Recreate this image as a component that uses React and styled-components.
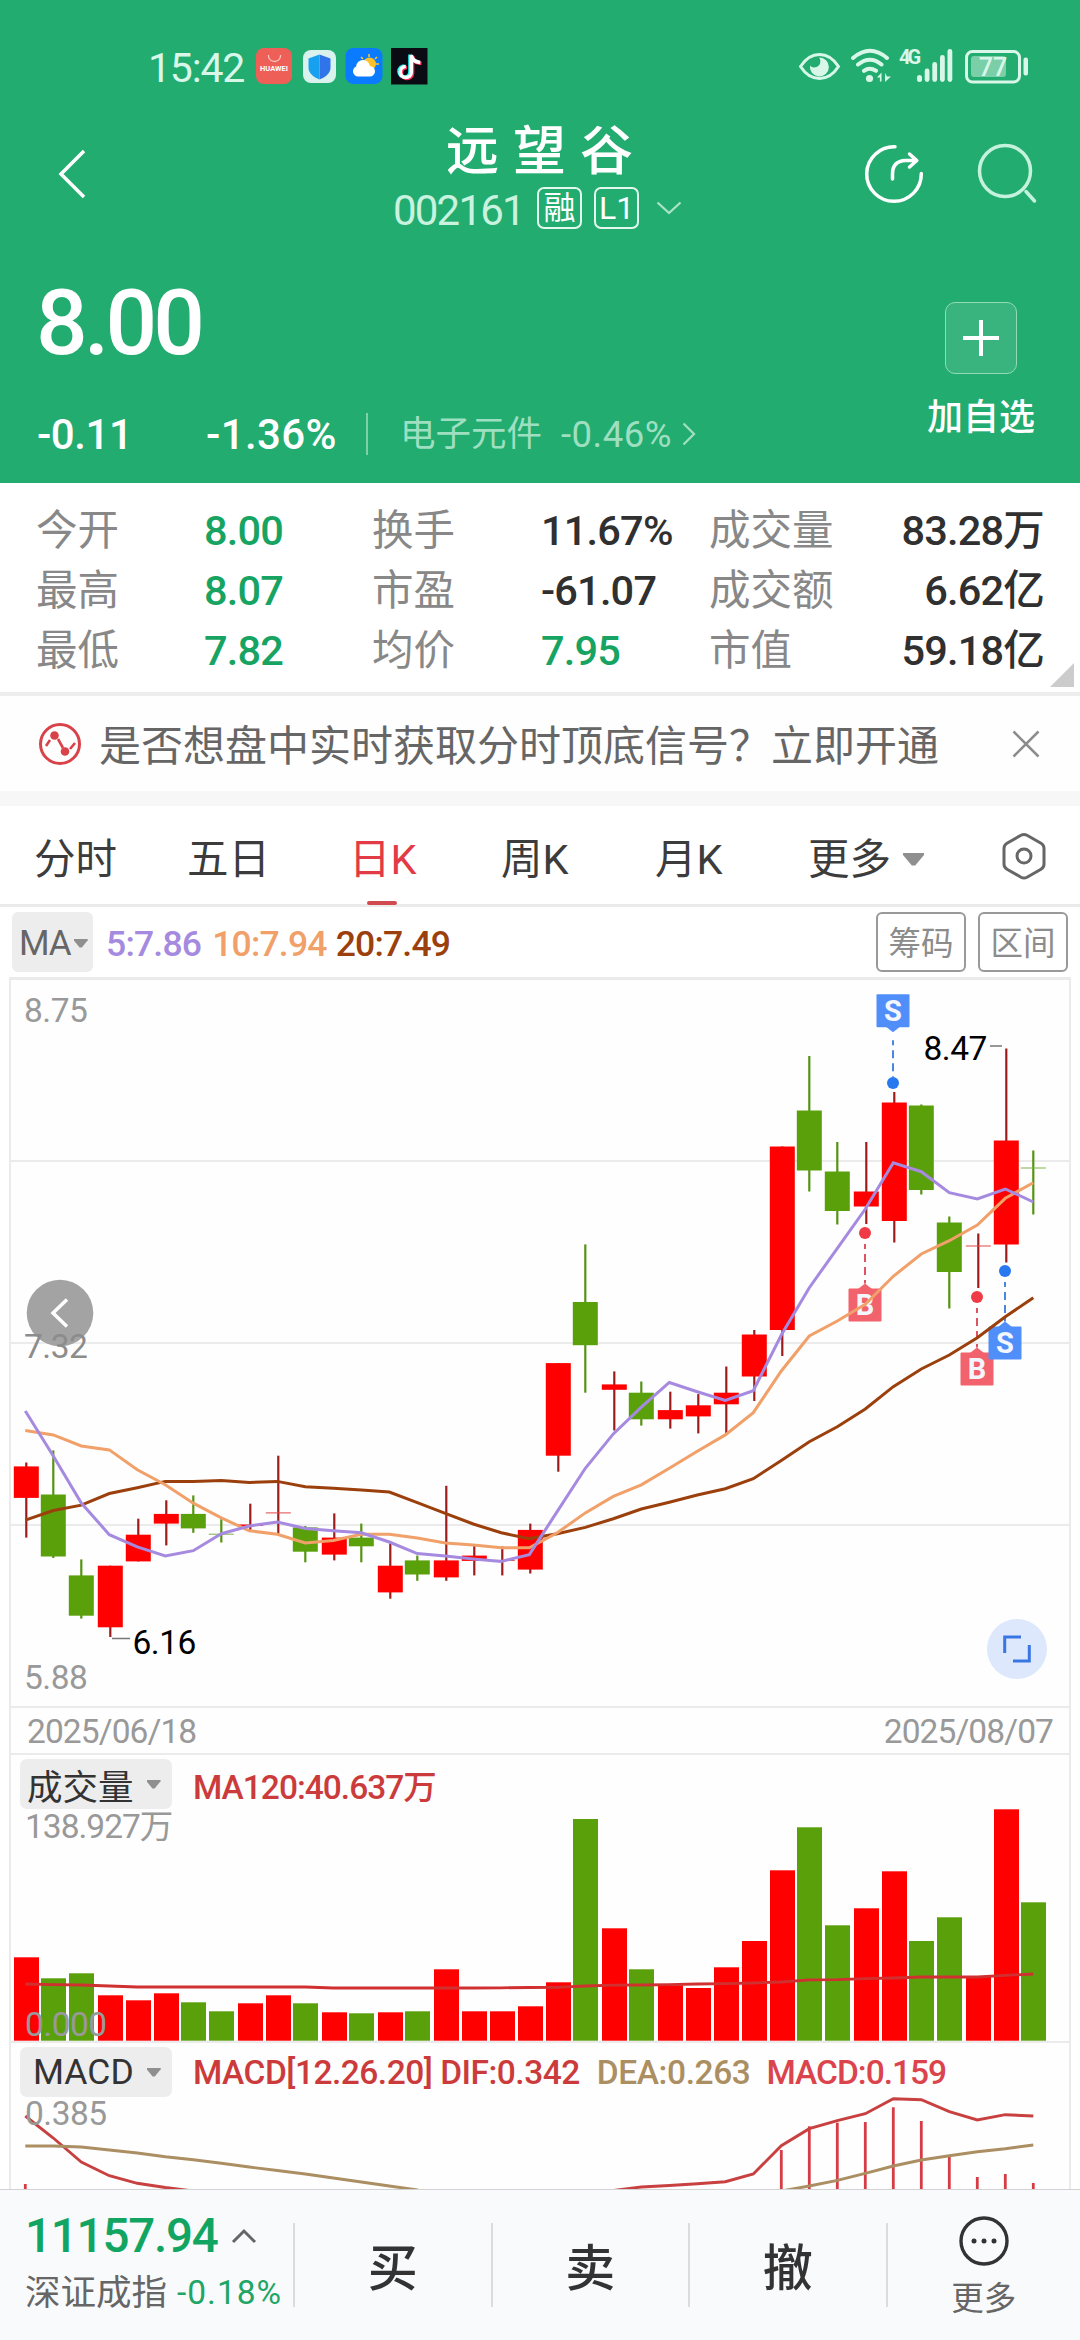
import React from "react";

//styled
import styled, { createGlobalStyle } from "styled-components";

//Data: [up, high, bodyTop, bodyBottom, low]
const candles = [
  [1, 1462.5, 1466.4, 1497.9, 1537.6],
  [0, 1450.4, 1494.5, 1556.5, 1558],
  [0, 1559.4, 1575.4, 1615.7, 1618.6],
  [1, 1565.7, 1565.7, 1627.3, 1637],
  [1, 1518.7, 1534.7, 1561.4, 1561.4],
  [1, 1500.3, 1513.9, 1523.6, 1545.4],
  [0, 1495.4, 1513.9, 1528.4, 1532.8],
  [0, 1519.2, 1533.7, 1534.7, 1542.5],
  [1, 1503.7, 1524.5, 1526, 1530.8],
  [1, 1455.7, 1512.4, 1513.4, 1533.7],
  [0, 1526, 1527.4, 1551.7, 1562.3],
  [1, 1513.4, 1537.6, 1554.6, 1560.4],
  [0, 1523.6, 1537.6, 1546.3, 1562.3],
  [1, 1543.4, 1565.7, 1592.4, 1598.7],
  [0, 1555.6, 1560.4, 1574.5, 1580.8],
  [1, 1485.8, 1560.4, 1577.4, 1580.8],
  [1, 1544.4, 1555.6, 1560.9, 1575.4],
  [1, 1546.3, 1559.9, 1560.9, 1575.4],
  [1, 1523.6, 1529.9, 1569.6, 1573.5],
  [1, 1363.1, 1363.1, 1455.7, 1471.7],
  [0, 1244.4, 1302, 1345.2, 1392.7],
  [1, 1371.4, 1384.4, 1389.8, 1430.5],
  [0, 1381.5, 1392.7, 1419.3, 1425.6],
  [1, 1391.7, 1410.1, 1419.3, 1428.6],
  [1, 1394.1, 1405.3, 1416.4, 1433.4],
  [1, 1366.5, 1392.7, 1404.3, 1433.4],
  [1, 1330, 1334.5, 1376.5, 1401],
  [1, 1146.5, 1146.5, 1330, 1356],
  [0, 1056, 1110.5, 1170.5, 1191.5],
  [0, 1142, 1171.5, 1211, 1224.5],
  [1, 1142, 1191.5, 1206.5, 1224],
  [1, 1092, 1102.5, 1221, 1242.5],
  [0, 1104.5, 1105.5, 1190, 1194.5],
  [0, 1216.5, 1222.5, 1272, 1308.5],
  [1, 1233.5, 1245.5, 1246.5, 1288],
  [1, 1048.5, 1140.5, 1244.5, 1262.5],
  [0, 1150.5, 1167.5, 1168.5, 1214.5],
];

const ma5 = [
  1411, 1456, 1503, 1534.7, 1546.8, 1556, 1550.7, 1533.7, 1526, 1522, 1528.4,
  1530.8, 1532.8, 1542, 1553.6, 1556, 1559, 1561.4, 1554.6, 1511.4, 1468.3,
  1433.9, 1407.2, 1382.5, 1391.7, 1400.4, 1390.7, 1335, 1287.7, 1248.3, 1209,
  1162.7, 1171.7, 1192.7, 1199, 1189, 1202,
];
const ma10 = [
  1430.5, 1434.9, 1446, 1449.9, 1469.8, 1484.8, 1503.2, 1517.8, 1530.8, 1534.2,
  1543, 1540.5, 1534.2, 1534.2, 1538.1, 1543, 1544.9, 1547.8, 1547.8, 1532.8,
  1512.9, 1496.4, 1484.8, 1468.3, 1451.3, 1434.9, 1412.7, 1371, 1336, 1321,
  1304.3, 1276.3, 1254, 1240.7, 1225, 1198.3, 1182.7,
];
const ma20 = [
  1520.2, 1510.5, 1505.1, 1493.5, 1487.7, 1481.4, 1481.4, 1480.4, 1482.4,
  1481.4, 1486.7, 1488.2, 1490.1, 1492.1, 1502.7, 1513.4, 1524, 1532.8, 1538.6,
  1533.7, 1527.4, 1518.7, 1509, 1502.2, 1495, 1488.7, 1478.7, 1460.5, 1441.7,
  1426.7, 1409, 1386.7, 1369, 1355, 1337.7, 1316.7, 1297.7,
];

const volumes = [
  1957.3, 1978.3, 1973.3, 1995.3, 2000.3, 1993.3, 2002.3, 2011.3, 2003.3,
  1995.3, 2003.3, 2012.3, 2013.3, 2012.3, 2011.3, 1969.3, 2011.3, 2011.3,
  2006.3, 1982.3, 1819, 1928.3, 1969.3, 1985.3, 1988, 1967.3, 1941, 1870.3,
  1827.3, 1925.3, 1908.3, 1871.3, 1941, 1917.3, 1976.7, 1809.3, 1902.3,
];
const ma120 = [
  1984, 1984.7, 1985, 1986, 1987, 1987, 1987, 1987, 1987, 1987, 1987, 1988,
  1988, 1988, 1988, 1988, 1988, 1987.8, 1987.5, 1987.3, 1986, 1985.2, 1985,
  1984.7, 1984, 1983.7, 1983, 1982, 1979.9, 1979.7, 1978.7, 1978, 1977, 1977,
  1977, 1975.3, 1974,
];

const dif = [
  2116, 2138, 2162, 2175.7, 2183.3, 2187.5, 2191, 2200, 2200, 2200, 2200, 2200,
  2200, 2200, 2200, 2200, 2200, 2200, 2200, 2200, 2196, 2190.5, 2187, 2185.5,
  2183.7, 2181.7, 2174, 2145.7, 2128.7, 2120.7, 2113.7, 2098.7, 2099.7, 2111.7,
  2120, 2114.7, 2116,
];
const dea = [
  2146, 2146, 2147, 2150, 2153, 2156.7, 2159.7, 2163.3, 2167, 2170.5, 2174,
  2178, 2182, 2186, 2190, 2200, 2200, 2200, 2200, 2200, 2200, 2200, 2200, 2200,
  2200, 2200, 2196, 2191, 2186, 2180.3, 2173.3, 2166, 2160, 2155.7, 2151.7,
  2148.7, 2145,
];
const hist = [
  [0, 2184],
  [27, 2150],
  [28, 2126.3],
  [29, 2122.7],
  [30, 2122],
  [31, 2107.3],
  [32, 2121],
  [33, 2155.7],
  [34, 2177],
  [35, 2174],
  [36, 2183],
];

const stats = [
  ["今开", "8.00", "up", "换手", "11.67%", "", "成交量", "83.28万"],
  ["最高", "8.07", "up", "市盈", "-61.07", "", "成交额", "6.62亿"],
  ["最低", "7.82", "up", "均价", "7.95", "up", "市值", "59.18亿"],
];

const tabs = [
  ["分时", 153],
  ["五日", 162],
  ["日K", 152],
  ["周K", 154],
  ["月K", 153],
];

const px = (i) => 25.3 + i * 28;
const points = (arr) => arr.map((y, i) => `${px(i)},${y}`).join(" ");
const RED = "#ff0000";
const GREEN = "#5aa00a";

const Marker = ({ x, dot, box, label, down }) => {
  const sell = label === "S";
  const top = box - 16.5;
  return (
    <g>
      <line
        x1={x}
        x2={x}
        y1={down ? top + 46 : dot + 11}
        y2={down ? dot - 6 : top - 5}
        stroke={sell ? "#4a86e0" : "#dc5560"}
        strokeWidth="2"
        strokeDasharray="8 5"
        strokeDashoffset="3"
      />
      <circle cx={x} cy={dot} r="6" fill={sell ? "#2878f0" : "#ee3b46"} />
      <rect
        x={x - 16.5}
        y={top}
        width="33"
        height="33"
        rx="1"
        fill={sell ? "#508ffa" : "#f1626c"}
      />
      <path
        d={
          down
            ? `M${x - 7} ${top + 32.5}h14l-7 5.5z`
            : `M${x - 7} ${top + 0.5}h14l-7-5.5z`
        }
        fill={sell ? "#508ffa" : "#f1626c"}
      />
      <MarkText x={x} y={box + 10}>
        {label}
      </MarkText>
    </g>
  );
};

const PriceChart = () => (
  <Plot $height={727} $pull viewBox="0 979 1080 727">
    {[1161, 1343, 1525].map((y) => (
      <line key={y} x1="10" x2="1070" y1={y} y2={y} stroke="#ebebeb" strokeWidth="2" />
    ))}
    <circle cx="60" cy="1313" r="33.3" fill="#a3a3a3" />
    <path d="M67 1299.500L53 1313L67 1326.500" fill="none" stroke="#fff" strokeWidth="3.500" />
    <AxisText x="24" y="1022">8.75</AxisText>
    <AxisText x="24" y="1358" $dark>7.32</AxisText>
    <AxisText x="24" y="1688.500">5.88</AxisText>
    <Marker x={893} dot={1083} box={1010.8} label="S" down />
    <Marker x={865} dot={1233} box={1305} label="B" />
    <Marker x={977} dot={1297} box={1369} label="B" />
    <Marker x={1005} dot={1271} box={1343} label="S" />
    {candles.map(([up, high, top, bottom, low], i) => {
      const cx = px(i) + (up ? 1 : 0);
      const flat = bottom - top < 1.2;
      return (
        <g key={i}>
          <line
            x1={cx}
            x2={cx}
            y1={high}
            y2={low}
            stroke={up ? "#9c1c1c" : "#559412"}
            strokeWidth="2.200"
          />
          <rect
            x={cx - 12.5}
            y={top}
            width="25"
            height={bottom - top}
            fill={up ? (flat ? "#e04848" : RED) : flat ? "#7fb048" : GREEN}
          />
        </g>
      );
    })}
    <polyline points={points(ma20)} fill="none" stroke="#9b400c" strokeWidth="3" />
    <polyline points={points(ma10)} fill="none" stroke="#f0a068" strokeWidth="3" />
    <polyline points={points(ma5)} fill="none" stroke="#a58ae0" strokeWidth="3" />
    <line x1="112" x2="130" y1="1638.500" y2="1638.500" stroke="#777" strokeWidth="1.500" />
    <AxisText x="132.500" y="1653.500" $black>6.16</AxisText>
    <line x1="990" x2="1002" y1="1046" y2="1046" stroke="#777" strokeWidth="1.500" />
    <AxisText x="923.500" y="1060" $black>8.47</AxisText>
    <circle cx="1017" cy="1649" r="30" fill="#dde8fc" />
    <path
      d="M1004.700 1653V1637H1021M1029.300 1645V1661H1013"
      fill="none"
      stroke="#3a76e2"
      strokeWidth="3"
    />
  </Plot>
);

const VolumeChart = () => (
  <Plot $height={231} viewBox="0 1810 1080 231">
    {volumes.map((y, i) => (
      <rect
        key={i}
        x={px(i) - 12 + (candles[i][0] ? 0.7 : -0.3)}
        y={y}
        width="25"
        height={2040.7 - y}
        fill={candles[i][0] ? RED : GREEN}
      />
    ))}
    <polyline points={points(ma120)} fill="none" stroke="#d03030" strokeWidth="2.800" />
    <AxisText x="25" y="1837.500" $ls={-1}>138.927万</AxisText>
    <AxisText x="25" y="2035.500">0.000</AxisText>
  </Plot>
);

const MacdChart = () => (
  <Plot $height={91} viewBox="0 2098 1080 91">
    {hist.map(([i, y]) => (
      <line key={i} x1={px(i)} x2={px(i)} y1={y} y2="2200" stroke="#d63c46" strokeWidth="2.800" />
    ))}
    <polyline points={points(dif)} fill="none" stroke="#c84040" strokeWidth="2.900" />
    <polyline points={points(dea)} fill="none" stroke="#ab8e62" strokeWidth="2.900" />
    <AxisText x="25" y="2125">0.385</AxisText>
  </Plot>
);

const StatusBar = () => (
  <Status>
    <Clock>15:42</Clock>
    <svg width="172" height="38" viewBox="256 47 172 38">
      <rect x="256" y="48" width="36" height="36" rx="8" fill="#ee5f58" />
      <path d="M268.500 55v1a6 5.500 0 0 0 12 0v-1" fill="none" stroke="#fbc5c0" strokeWidth="1.300" />
      <TinyText x="274" y="71">HUAWEI</TinyText>
      <rect x="303" y="50" width="33" height="33" rx="8" fill="#d9f2ee" />
      <path d="M319.500 54.500l11 4v9c0 6-5 9.500-11 12z" fill="#2f74e8" />
      <path d="M319.500 54.500l-11 4v9c0 6 5 9.500 11 12z" fill="#18a0f0" />
      <rect x="345.500" y="48" width="37" height="36" rx="8" fill="#0a7bff" />
      <g stroke="#ffc832" strokeWidth="1.500">
        <path d="M369 54v3M361 57l2 2M377 57l-2 2M379 64h-3" />
      </g>
      <circle cx="369.500" cy="64" r="6.500" fill="#ffc226" />
      <circle cx="363" cy="67" r="7" fill="#fff" />
      <rect x="353" y="66" width="22" height="10.500" rx="5.200" fill="#fff" />
      <rect x="391" y="48" width="36.500" height="36.500" fill="#0b0b14" />
      <g fill="none" strokeWidth="3.600">
        <path d="M410 54.500v17a5.500 5.500 0 1 1-5.500-5.500M410 54.500c.5 4.500 4 7 9 7.500" stroke="#25f4ee" />
        <path d="M412.500 56v17a5.500 5.500 0 1 1-5.500-5.500M412.500 56c.5 4.500 4 7 9 7.500" stroke="#fe2c55" />
        <path d="M411.300 55v17a5.500 5.500 0 1 1-5.500-5.500M411.300 55c.5 4.500 4 7 9 7.500" stroke="#fff" />
      </g>
    </svg>
    <StatusRight width="232" height="38" viewBox="798 47 232 38" fill="#d8f7e9">
      <path
        d="M800.500 66.500C806 58 812 54.500 819.500 54.500S833 58 838.500 66.500C833 75 827 78.500 819.500 78.500S806 75 800.500 66.500z"
        fill="none"
        stroke="#d8f7e9"
        strokeWidth="3"
      />
      <path d="M819 57.500a9.500 9.500 0 1 1-9 8c1.500 2 4 2.500 6.500 1.500c4-1.500 5-6 2.500-9.500z" />
      <g fill="none" stroke="#d8f7e9" strokeWidth="4" strokeLinecap="round">
        <path d="M853 58q17-14.500 34 0M858 64.500q12-9.500 23.500 0M864 70.800q5.500-4 12 0" />
      </g>
      <circle cx="869.500" cy="78.500" r="3.600" />
      <path d="M877 77.500l4.500-5v9h-1.600v-4zM885 73v9l6-5.500h-4z" />
      <NetText x="899" y="64">4G</NetText>
      <rect x="917" y="75" width="5" height="7" rx="2.500" />
      <rect x="924.700" y="68.500" width="4.800" height="13.500" rx="2.400" />
      <rect x="932.300" y="62" width="4.800" height="20" rx="2.400" />
      <rect x="940" y="55" width="4.800" height="27" rx="2.400" />
      <rect x="947.500" y="49" width="4.800" height="33" rx="2.400" />
      <rect x="966.500" y="51.500" width="53" height="30.500" rx="6" fill="none" stroke="#d8f7e9" strokeWidth="3" />
      <rect x="971" y="56" width="35" height="21" rx="3" fill="#7acfa8" />
      <BatteryText x="993" y="76">77</BatteryText>
      <rect x="1023.500" y="57.500" width="4.500" height="18" rx="2" />
    </StatusRight>
  </Status>
);

const App = () => {
  return (
    <Page>
      <GlobalStyle />
      <Header>
        <StatusBar />
        <Nav>
          <BackIcon width="30" height="54" viewBox="0 0 30 54">
            <path d="M27 4L4 27L27 50" fill="none" stroke="#fff" strokeWidth="3.500" />
          </BackIcon>
          <TitleBox>
            <Title>远望谷</Title>
            <CodeRow>
              <Code>002161</Code>
              <Badge>融</Badge>
              <Badge>L1</Badge>
              <svg width="26" height="14" viewBox="0 0 26 14">
                <path d="M1.500 1.500L13 12L24.500 1.500" fill="none" stroke="#a9e3c8" strokeWidth="2.300" />
              </svg>
            </CodeRow>
          </TitleBox>
          <NavIcons width="174" height="64" viewBox="864 142 174 64">
            <g fill="none" stroke="#fff" strokeWidth="3.500" strokeLinecap="round" strokeLinejoin="round">
              <path d="M895 146.700A27.300 27.300 0 1 0 921.300 173.500" />
              <path d="M892.500 179v-5q0-13 13-13.500h10M909.500 154l7.300 6.500-7.300 6.500" />
              <g stroke="#c4f2dd">
                <circle cx="1005" cy="171" r="25.500" />
                <path d="M1026 191.500l8.500 9.500" />
              </g>
            </g>
          </NavIcons>
        </Nav>
        <Quote>
          <div>
            <Price>8.00</Price>
            <ChangeRow>
              <Change>-0.11</Change>
              <Change>-1.36%</Change>
              <Sector>
                <SectorName>电子元件</SectorName>
                <SectorRate>-0.46%</SectorRate>
                <svg width="14" height="24" viewBox="0 0 14 24">
                  <path d="M1.500 1.500L12 12L1.500 22.500" fill="none" stroke="#9fdfc1" strokeWidth="2.300" />
                </svg>
              </Sector>
            </ChangeRow>
          </div>
          <AddBox>
            <AddButton>
              <svg width="36" height="36" viewBox="0 0 36 36">
                <path d="M18 0V36M0 18H36" stroke="#fff" strokeWidth="4" />
              </svg>
            </AddButton>
            加自选
          </AddBox>
        </Quote>
      </Header>

      <Stats>
        {stats.map(([l1, v1, t1, l2, v2, t2, l3, v3]) => (
          <StatRow key={l1}>
            <Label>{l1}</Label>
            <Value $tone={t1}>{v1}</Value>
            <Label>{l2}</Label>
            <Value $tone={t2}>{v2}</Value>
            <Label>{l3}</Label>
            <Value $right>{v3}</Value>
          </StatRow>
        ))}
        <Corner />
      </Stats>

      <Notice>
        <svg width="44" height="44" viewBox="0 0 44 44">
          <circle cx="22" cy="22" r="19.500" fill="none" stroke="#d8434a" strokeWidth="3" />
          <path d="M8 24l4-6M20 17l5 9M32 27l5-6" fill="none" stroke="#d8434a" strokeWidth="2.600" />
          <circle cx="16.500" cy="13.500" r="4.300" fill="#d8434a" />
          <circle cx="27" cy="29.500" r="4.300" fill="#d8434a" />
        </svg>
        <NoticeText>是否想盘中实时获取分时顶底信号？立即开通</NoticeText>
        <svg width="28" height="28" viewBox="0 0 28 28">
          <path d="M1.500 1.500L26.500 26.500M26.500 1.500L1.500 26.500" stroke="#8c8c8c" strokeWidth="2.500" />
        </svg>
      </Notice>

      <Tabs>
        {tabs.map(([t, w]) => (
          <Tab key={t} $w={w} $active={t === "日K"}>
            {t}
          </Tab>
        ))}
        <Tab $w={154}>
          更多
          <Caret $w={21} $h={13} $gap={12} />
        </Tab>
        <TabGear width="44" height="48" viewBox="0 0 44 48">
          <path
            d="M19 3.200q3-1.600 6 0l14 8q3 1.800 3 5v16q0 3.200-3 5l-14 8q-3 1.600-6 0l-14-8q-3-1.800-3-5v-16q0-3.200 3-5z"
            fill="none"
            stroke="#666"
            strokeWidth="3"
          />
          <circle cx="22" cy="24" r="7" fill="none" stroke="#666" strokeWidth="3" />
        </TabGear>
      </Tabs>

      <MaBar>
        <MaSelect>
          MA
          <Caret $w={14} $h={9} $gap={3} />
        </MaSelect>
        <MaValue $color="#a58ae0" $gap={13}>5:7.86</MaValue>
        <MaValue $color="#f0a068" $gap={11}>10:7.94</MaValue>
        <MaValue $color="#9b400c" $gap={9}>20:7.49</MaValue>
        <Outline $first>筹码</Outline>
        <Outline>区间</Outline>
      </MaBar>

      <Charts>
        <Frame $first>
          <PriceChart />
        </Frame>
        <Frame>
          <Dates>
            <span>2025/06/18</span>
            <span>2025/08/07</span>
          </Dates>
        </Frame>
        <Frame>
          <PanelHead>
            <PanelSelect>
              成交量
              <Caret $w={14} $h={9} $gap={13} />
            </PanelSelect>
            <Legend $color="#cb3b3b" $gap={21} $ls={-1}>MA120:40.637万</Legend>
          </PanelHead>
          <VolumeChart />
        </Frame>
        <Frame>
          <PanelHead>
            <PanelSelect $latin>
              MACD
              <Caret $w={14} $h={9} $gap={13} />
            </PanelSelect>
            <Legend $color="#cb3b3b" $gap={21} $ls={-0.5}>MACD[12.26.20] DIF:0.342</Legend>
            <Legend $color="#ab8e62" $gap={17} $ls={-0.4}>DEA:0.263</Legend>
            <Legend $color="#db444c" $gap={16} $ls={-1}>MACD:0.159</Legend>
          </PanelHead>
          <MacdChart />
        </Frame>
      </Charts>

      <Footer>
        <IndexBox>
          <IndexValue>
            11157.94
            <svg width="26" height="16" viewBox="0 0 26 16">
              <path d="M2 14L13 3L24 14" fill="none" stroke="#666" strokeWidth="3" />
            </svg>
          </IndexValue>
          <IndexName>
            深证成指<IndexRate>-0.18%</IndexRate>
          </IndexName>
        </IndexBox>
        <Trade>买</Trade>
        <Trade>卖</Trade>
        <Trade>撤</Trade>
        <More>
          <svg width="50" height="50" viewBox="0 0 50 50">
            <circle cx="25" cy="25" r="23" fill="none" stroke="#333" strokeWidth="3.400" />
            <circle cx="15" cy="25" r="2.500" fill="#333" />
            <circle cx="25" cy="25" r="2.500" fill="#333" />
            <circle cx="35" cy="25" r="2.500" fill="#333" />
          </svg>
          更多
        </More>
      </Footer>
    </Page>
  );
};

//styled Components
const GlobalStyle = createGlobalStyle`
  * {
    box-sizing: border-box;
  }
  body {
    margin: 0;
    background: #fff;
    font-family: Roboto, "Noto Sans CJK SC", sans-serif;
  }
  svg {
    display: block;
    flex: none;
  }
`;

const Page = styled.div`
  width: 1080px;
  height: 2340px;
  overflow: hidden;
  display: flex;
  flex-direction: column;
  white-space: nowrap;
`;

const Header = styled.header`
  height: 483px;
  background-color: #22ac70;
  color: #fff;
`;

const Status = styled.div`
  display: flex;
  padding: 47px 0 0 148px;
  height: 120px;
`;

const Clock = styled.div`
  width: 108px;
  font-size: 41px;
  line-height: 42px;
  letter-spacing: -1.2px;
  color: #d8f7e9;
`;

const StatusRight = styled.svg`
  margin-left: 370px;
`;

const TinyText = styled.text`
  font-size: 7.5px;
  font-weight: 700;
  fill: #fff;
  text-anchor: middle;
`;

const NetText = styled.text`
  font-size: 20px;
  font-weight: 700;
  letter-spacing: -3px;
`;

const BatteryText = styled.text`
  font-size: 25px;
  font-weight: 500;
  text-anchor: middle;
`;

const Nav = styled.div`
  display: flex;
  height: 140px;
`;

const BackIcon = styled.svg`
  margin: 27px 0 0 57px;
`;

const TitleBox = styled.div`
  width: 300px;
  margin-left: 306px;
`;

const Title = styled.h1`
  margin: 0;
  padding: 2px 0 0 53px;
  height: 60px;
  font-size: 53px;
  line-height: 60px;
  font-weight: 500;
  letter-spacing: 14px;
`;

const CodeRow = styled.div`
  display: flex;
  align-items: center;
  height: 56px;
`;

const Code = styled.span`
  width: 144px;
  padding-top: 4px;
  font-size: 42px;
  letter-spacing: -1.8px;
  color: #c9f2df;
`;

const Badge = styled.span`
  width: 45px;
  height: 42px;
  margin-right: 12px;
  border: 2px solid #e2f8ee;
  border-radius: 7px;
  font-size: 32px;
  line-height: 38px;
  text-align: center;
  & + svg {
    margin-left: 5px;
  }
`;

const NavIcons = styled.svg`
  margin: 22px 0 0 171px;
`;

const Quote = styled.div`
  display: flex;
  justify-content: space-between;
  padding: 13px 46px 0 37px;
`;

const Price = styled.div`
  height: 100px;
  margin-left: -1px;
  font-size: 91px;
  line-height: 101px;
  font-weight: 500;
  letter-spacing: -3.8px;
`;

const ChangeRow = styled.div`
  display: flex;
  align-items: center;
  height: 42px;
  margin-top: 40px;
`;

const Change = styled.span`
  width: 169px;
  font-size: 42px;
  font-weight: 500;
  letter-spacing: -0.4px;
  & + & {
    width: 160px;
    letter-spacing: 0.4px;
  }
`;

const Sector = styled.div`
  display: flex;
  align-items: center;
  height: 42px;
  padding-left: 32px;
  border-left: 2px solid #7fd0aa;
  color: #9fdfc1;
`;

const SectorName = styled.span`
  width: 161px;
  font-size: 35.5px;
  line-height: 40px;
`;

const SectorRate = styled.span`
  width: 121px;
  font-size: 36.5px;
  letter-spacing: 0.5px;
`;

const AddBox = styled.div`
  display: flex;
  flex-direction: column;
  align-items: center;
  width: 106px;
  padding-top: 29px;
  font-size: 36px;
  line-height: 88px;
  font-weight: 500;
`;

const AddButton = styled.div`
  display: flex;
  align-items: center;
  justify-content: center;
  width: 72px;
  height: 72px;
  border: 1.5px solid #93dab6;
  border-radius: 10px;
  background-color: #3ab47e;
`;

const Stats = styled.section`
  position: relative;
  height: 213px;
  padding: 17px 36px 0;
  border-bottom: 4px solid #ededed;
`;

const StatRow = styled.div`
  display: grid;
  grid-template-columns: 168px 168px 169px 168px 180px 1fr;
  height: 60px;
  font-size: 41.5px;
  line-height: 61px;
`;

const Label = styled.span`
  color: #888;
`;

const Value = styled.span`
  font-weight: 500;
  letter-spacing: -0.8px;
  text-align: ${(p) => (p.$right ? "right" : "left")};
  color: ${(p) => (p.$tone === "up" ? "#17a463" : "#303030")};
`;

const Corner = styled.i`
  position: absolute;
  right: 6px;
  bottom: 5px;
  border: 12px solid transparent;
  border-right-color: #ccc;
  border-bottom-color: #ccc;
`;

const Notice = styled.section`
  display: flex;
  align-items: center;
  height: 110px;
  padding: 0 40px 0 38px;
  border-bottom: 15px solid #f7f7f7;
  background-color: #fefefe;
`;

const NoticeText = styled.div`
  width: 930px;
  padding: 6px 0 0 17px;
  font-size: 42px;
  line-height: 50px;
  color: #666;
`;

const Tabs = styled.nav`
  display: flex;
  align-items: flex-start;
  height: 101px;
  padding-left: 34px;
  border-bottom: 3px solid #ebebeb;
`;

const Tab = styled.div`
  position: relative;
  display: flex;
  align-items: center;
  width: ${(p) => p.$w}px;
  height: 98px;
  padding-top: 8px;
  font-size: 41.5px;
  line-height: 89px;
  color: ${(p) => (p.$active ? "#e33b45" : "#3c3c3c")};
  &::after {
    content: "";
    display: ${(p) => (p.$active ? "block" : "none")};
    position: absolute;
    left: 18px;
    bottom: -1px;
    width: 30px;
    height: 4px;
    border-radius: 2px;
    background-color: #d14a50;
  }
`;

const TabGear = styled.svg`
  margin: 26px 0 0 40px;
`;

const Caret = styled.i`
  width: ${(p) => p.$w}px;
  height: ${(p) => p.$h}px;
  margin-left: ${(p) => p.$gap}px;
  background-color: #8f8f8f;
  clip-path: polygon(0 0, 100% 0, 100% 20%, 58% 100%, 42% 100%, 0 20%);
`;

const MaBar = styled.div`
  display: flex;
  align-items: center;
  height: 70px;
  padding: 0 12px;
`;

const MaSelect = styled.div`
  display: flex;
  align-items: center;
  width: 81px;
  height: 60px;
  padding: 2px 0 0 7px;
  border-radius: 6px;
  background-color: #ededed;
  font-size: 35px;
  letter-spacing: -1px;
  color: #666;
`;

const MaValue = styled.span`
  margin-left: ${(p) => p.$gap}px;
  padding-top: 3px;
  font-size: 35.5px;
  font-weight: 500;
  letter-spacing: -0.8px;
  color: ${(p) => p.$color};
`;

const Outline = styled.div`
  width: 90px;
  height: 60px;
  margin-left: ${(p) => (p.$first ? "auto" : "12px")};
  border: 2px solid #999;
  border-radius: 6px;
  font-size: 32.5px;
  line-height: 60px;
  text-align: center;
  color: #8c8c8c;
`;

const Charts = styled.section`
  height: 1212px;
  overflow: hidden;
`;

const Frame = styled.div`
  margin: 0 9px;
  border: 2px solid #ebebeb;
  border-top: ${(p) => (p.$first ? "3px solid #ebebeb" : "0")};
  background-color: #fefefe;
`;

const Plot = styled.svg`
  width: 1080px;
  height: ${(p) => p.$height}px;
  margin: ${(p) => (p.$pull ? "-1px" : "0")} -11px 0;
  overflow: visible;
`;

const AxisText = styled.text`
  font-size: 33.5px;
  letter-spacing: ${(p) => p.$ls || -0.5}px;
  fill: ${(p) => (p.$black ? "#000" : p.$dark ? "#8c8c8c" : "#999")};
`;

const MarkText = styled.text`
  font-size: 29px;
  font-weight: 700;
  fill: #f4f6ff;
  text-anchor: middle;
`;

const Dates = styled.div`
  display: flex;
  justify-content: space-between;
  height: 45px;
  padding: 0 16px 0 16px;
  font-size: 33.5px;
  line-height: 48px;
  letter-spacing: -0.9px;
  color: #999;
`;

const PanelHead = styled.div`
  display: flex;
  align-items: center;
  height: 55px;
  padding: 3px 9px 0;
`;

const PanelSelect = styled.div`
  display: flex;
  align-items: center;
  width: 152px;
  height: 50px;
  padding-left: ${(p) => (p.$latin ? 13 : 7)}px;
  border-radius: 7px;
  background-color: #ededed;
  font-size: 35.5px;
  color: #333;
`;

const Legend = styled.span`
  margin-left: ${(p) => p.$gap}px;
  font-size: 33.5px;
  font-weight: 500;
  letter-spacing: ${(p) => p.$ls}px;
  color: ${(p) => p.$color};
`;

const Footer = styled.footer`
  display: flex;
  align-items: center;
  height: 151px;
  border-top: 1.5px solid #d2d2d4;
  background-color: #f9fafc;
`;

const IndexBox = styled.div`
  width: 293px;
  padding-left: 25px;
`;

const IndexValue = styled.div`
  display: flex;
  align-items: center;
  gap: 13px;
  font-size: 47.5px;
  line-height: 56px;
  font-weight: 500;
  letter-spacing: -1.2px;
  color: #12a562;
`;

const IndexName = styled.div`
  display: flex;
  align-items: center;
  font-size: 35.5px;
  line-height: 58px;
  color: #666;
`;

const IndexRate = styled.span`
  margin-left: 10px;
  font-size: 33.5px;
  letter-spacing: 1px;
  color: #1fa566;
`;

const Trade = styled.div`
  width: 197.5px;
  height: 84px;
  border-left: 2px solid #dcdcde;
  font-size: 50px;
  line-height: 92px;
  font-weight: 500;
  text-align: center;
  color: #333;
`;

const More = styled.div`
  display: flex;
  flex-direction: column;
  align-items: center;
  justify-content: center;
  flex: 1;
  height: 84px;
  padding-top: 18px;
  border-left: 2px solid #dcdcde;
  font-size: 32.5px;
  line-height: 66px;
  color: #666;
`;

export default App;
